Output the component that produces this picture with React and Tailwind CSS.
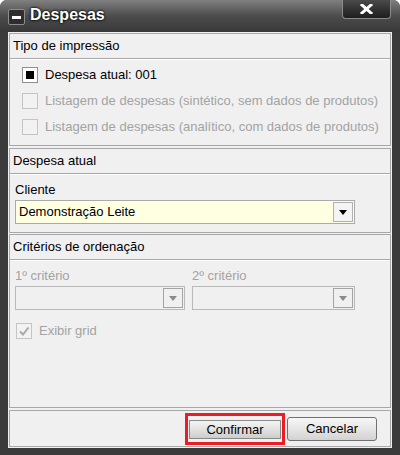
import React from 'react'

const font = { fontFamily: '"Liberation Sans", Arial, sans-serif' }

const Check = ({ on, disabled, tick }) => (
  <div className={`w-[16px] h-[16px] shrink-0 border flex items-center justify-center ${disabled ? 'border-[#c4c4c4] bg-[#f2f2f2]' : 'border-[#8e8e8e] bg-white'}`}>
    {on && <div className='w-[8px] h-[8px] bg-black' />}
    {tick && (
      <svg width='12' height='12' viewBox='0 0 12 12'>
        <path d='M2 6.5 L5 9.5 L10.5 2.5' fill='none' stroke='#a8a8a8' strokeWidth='2' />
      </svg>
    )}
  </div>
)

const Header = ({ children }) => (
  <div className='h-[25px] flex items-center pl-[3px] border-b border-[#a8a8a8] shadow-[0_1px_0_#ffffff] text-[13px] text-black'>
    {children}
  </div>
)

const Combo = ({ width, value, disabled }) => (
  <div className={`h-[24px] flex items-center border ${disabled ? 'border-[#b9b9b9] bg-[#f0f0f0]' : 'border-[#a9a9a9] bg-[#ffffe1]'}`} style={{ width }}>
    <div className='flex-1 pl-[3px] text-[13px] text-black'>{value}</div>
    <div className={`w-[20px] h-[20px] mr-[1px] flex items-center justify-center border ${disabled ? 'border-[#a4a4a4] bg-[#f0f0f0]' : 'border-[#b0b0b0] bg-[#f4f4f4]'}`}>
      <svg width='8' height='5' viewBox='0 0 8 5'>
        <path d='M0 0 H8 L4 5 Z' fill={disabled ? '#8a8a8a' : '#000'} />
      </svg>
    </div>
  </div>
)

export default function App() {
  return (
    <div className='w-[400px] h-[455px] bg-white' style={font}>
      <div className='h-full flex flex-col rounded-t-[7px] bg-[#3b3b3b] overflow-hidden'>

        {/* Title bar */}
        <div className='h-[32px] shrink-0 flex items-start bg-gradient-to-b from-[#808080] via-[#4c4c4c] to-[#383838]'>
          <div className='mt-[9px] ml-[8px] w-[17px] h-[16px] rounded-[2px] bg-[#2e2e2e] border border-[#8c8c8c] flex items-center justify-center'>
            <div className='w-[9px] h-[3px] bg-white' />
          </div>
          <div className='ml-[5px] mt-[6px] text-[16px] leading-[18px] font-bold text-white [text-shadow:0_0_3px_#000,0_0_2px_#000]'>Despesas</div>
          <div className='ml-auto mr-[9px] w-[49px] h-[19px] rounded-b-[4px] border border-t-0 border-[#8a8a8a] bg-gradient-to-b from-[#4a4a4a] to-[#1e1e1e] flex items-center justify-center'>
            <svg width='13' height='10' viewBox='0 0 13 10'>
              <path d='M2 1 L11 9 M11 1 L2 9' stroke='#fff' strokeWidth='3' strokeLinecap='square' />
            </svg>
          </div>
        </div>

        {/* Content */}
        <div className='flex-1 mx-[8px] px-[1px] pt-[1px] pb-[1px] bg-[#f0f0f0] flex flex-col'>

          {/* Tipo de impressão */}
          <div className='border border-[#a8a8a8]'>
            <Header>Tipo de impressão</Header>
            <div className='h-[86px] pt-[3px] pl-[12px]'>
              <div className='h-[26px] flex items-center gap-[7px]'>
                <Check on />
                <span className='text-[13px] text-black'>Despesa atual: 001</span>
              </div>
              <div className='h-[26px] flex items-center gap-[7px]'>
                <Check disabled />
                <span className='text-[13px] text-[#a3a3a3]'>Listagem de despesas (sintético, sem dados de produtos)</span>
              </div>
              <div className='h-[26px] flex items-center gap-[7px]'>
                <Check disabled />
                <span className='text-[13px] text-[#a3a3a3]'>Listagem de despesas (analítico, com dados de produtos)</span>
              </div>
            </div>
          </div>

          {/* Despesa atual */}
          <div className='mt-[2px] border border-[#a8a8a8]'>
            <Header>Despesa atual</Header>
            <div className='h-[58px] pt-[8px] pl-[5px]'>
              <div className='h-[16px] leading-[16px] text-[13px] text-black'>Cliente</div>
              <div className='mt-[2px]'>
                <Combo width={340} value='Demonstração Leite' />
              </div>
            </div>
          </div>

          {/* Critérios de ordenação */}
          <div className='mt-[1px] border border-[#a8a8a8]'>
            <Header>Critérios de ordenação</Header>
            <div className='h-[147px] pt-[8px] pl-[5px]'>
              <div className='flex gap-[7px]'>
                <div>
                  <div className='h-[16px] leading-[16px] text-[13px] text-[#a3a3a3]'>1º critério</div>
                  <div className='mt-[2px]'><Combo width={170} disabled /></div>
                </div>
                <div>
                  <div className='h-[16px] leading-[16px] text-[13px] text-[#a3a3a3]'>2º critério</div>
                  <div className='mt-[2px]'><Combo width={163} disabled /></div>
                </div>
              </div>
              <div className='mt-[11px] ml-[1px] flex items-center gap-[7px]'>
                <Check disabled tick />
                <span className='text-[13px] text-[#a3a3a3]'>Exibir grid</span>
              </div>
            </div>
          </div>

          {/* Buttons */}
          <div className='mt-[2px] flex-1 border border-[#a8a8a8] flex items-center justify-end pr-[13px] gap-[2px]'>
            <div className='border-[3px] border-[#ec1c24] p-[1px]'>
              <button className='w-[92px] h-[19px] border border-[#8a8a8a] bg-gradient-to-b from-[#f4f4f4] via-[#e2e2e2] to-[#cdcdcd] text-[13px] leading-[17px] text-black'>Confirmar</button>
            </div>
            <button className='w-[90px] h-[24px] rounded-[3px] border border-[#707070] bg-gradient-to-b from-[#f6f6f6] via-[#e6e6e6] to-[#d2d2d2] text-[13px] text-black'>Cancelar</button>
          </div>
        </div>

        <div className='h-[7px] shrink-0' />
      </div>
    </div>
  )
}
